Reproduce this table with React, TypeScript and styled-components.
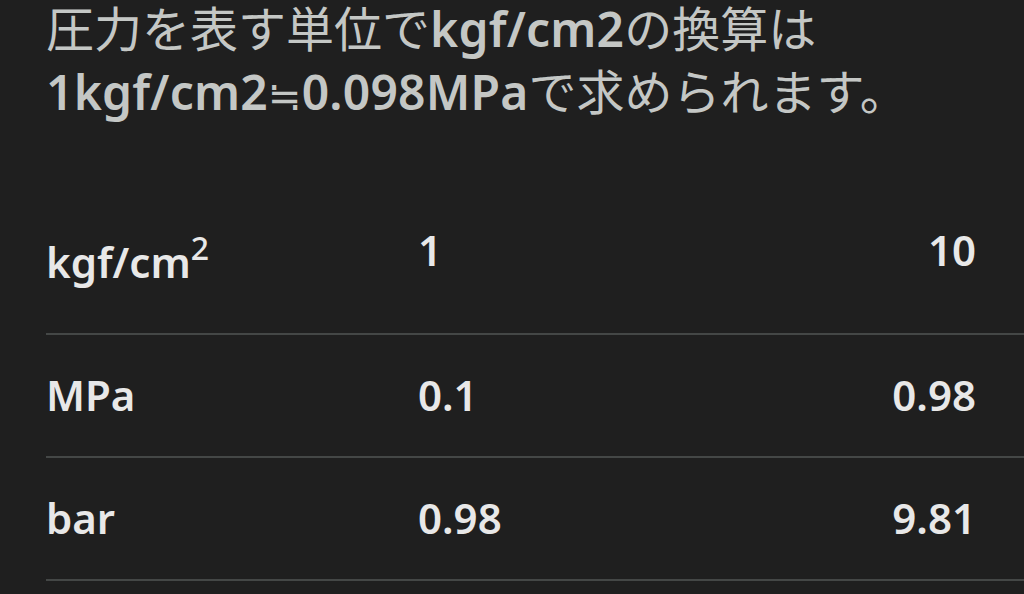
import styled, { createGlobalStyle } from "styled-components";

const GlobalStyle = createGlobalStyle`
  html, body {
    margin: 0;
    padding: 0;
    background: #1f1f1f;
    overflow: hidden;
  }
  body {
    font-family: "Noto Sans", "Noto Sans CJK JP", sans-serif;
  }
`;

const Page = styled.div`
  width: 1024px;
  height: 594px;
  background: #1f1f1f;
`;

const Lead = styled.p`
  margin: -4px 0 0;
  padding-left: 46px;
  font-family: "Noto Sans CJK JP", sans-serif;
  font-size: 48px;
  line-height: 60px;
  font-weight: 400;
  color: #c4c7c5;
  white-space: nowrap;
`;

const Latin = styled.span`
  font-family: "Noto Sans", "DejaVu Sans", "Noto Sans CJK JP", sans-serif;
  font-weight: 600;
  letter-spacing: 0.2px;
`;

const Approx = styled.span`
  font-family: "DejaVu Sans", "Noto Sans CJK JP", sans-serif;
  font-weight: 400;
  font-size: 40px;
  line-height: 0;
`;

const Table = styled.div`
  margin: 68px 0 0 46px;
  color: #e8e8e8;
  font-family: "Noto Sans", sans-serif;
  font-size: 42px;
  font-weight: 600;
  line-height: 56px;
`;

const Row = styled.div<{ $head?: boolean }>`
  display: grid;
  grid-template-columns: 372px 1fr auto;
  align-items: start;
  padding-bottom: ${(p) => (p.$head ? 43 : 33)}px;
  border-bottom: 2px solid #444746;
`;

const Cell = styled.div<{ $drop?: boolean; $end?: boolean }>`
  padding-top: ${(p) => (p.$drop ? 44 : 32)}px;
  padding-right: ${(p) => (p.$end ? 48 : 0)}px;
  text-align: ${(p) => (p.$end ? "right" : "left")};
  white-space: nowrap;
`;

const Sup = styled.sup`
  font-size: 32px;
  font-weight: 500;
  line-height: 0;
  vertical-align: 18px;
`;

const rows = [
  { unit: "MPa", a: "0.1", b: "0.98" },
  { unit: "bar", a: "0.98", b: "9.81" },
];

export default function App() {
  return (
    <Page>
      <GlobalStyle />
      <Lead>
        圧力を表す単位で<Latin>kgf/cm2</Latin>の換算は
        <br />
        <Latin>
          1kgf/cm2<Approx>≒</Approx>0.098MPa
        </Latin>
        で求められます。
      </Lead>
      <Table>
        <Row $head>
          <Cell $drop>
            kgf/cm<Sup>2</Sup>
          </Cell>
          <Cell>1</Cell>
          <Cell $end>10</Cell>
        </Row>
        {rows.map((r) => (
          <Row key={r.unit}>
            <Cell>{r.unit}</Cell>
            <Cell>{r.a}</Cell>
            <Cell $end>{r.b}</Cell>
          </Row>
        ))}
      </Table>
    </Page>
  );
}
